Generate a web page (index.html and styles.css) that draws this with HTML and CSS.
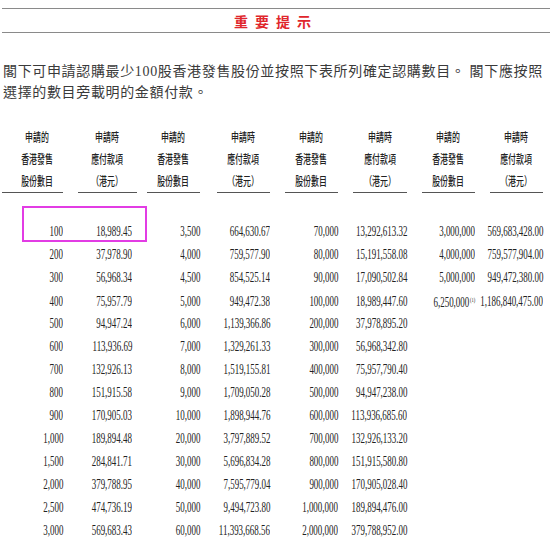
FILE: index.html
```html
<!DOCTYPE html>
<html lang="zh-Hant">
<head>
<meta charset="utf-8">
<title>重要提示</title>
<link rel="stylesheet" href="styles.css">
</head>
<body>
<div class="page">
  <div class="banner"><span class="title">重要提示</span></div>
  <p class="intro">閣下可申請認購最少100股香港發售股份並按照下表所列確定認購數目。 閣下應按照<br>選擇的數目旁載明的金額付款。</p>

  <div class="table">
    <div class="row head">
      <div class="cell"><div class="hd first"><span class="hl">申請的</span><span class="hl">香港發售</span><span class="hl">股份數目</span></div></div>
      <div class="cell"><div class="hd"><span class="hl">申請時</span><span class="hl">應付款項</span><span class="hl">（港元）</span></div></div>
      <div class="cell"><div class="hd"><span class="hl">申請的</span><span class="hl">香港發售</span><span class="hl">股份數目</span></div></div>
      <div class="cell"><div class="hd"><span class="hl">申請時</span><span class="hl">應付款項</span><span class="hl">（港元）</span></div></div>
      <div class="cell"><div class="hd"><span class="hl">申請的</span><span class="hl">香港發售</span><span class="hl">股份數目</span></div></div>
      <div class="cell"><div class="hd"><span class="hl">申請時</span><span class="hl">應付款項</span><span class="hl">（港元）</span></div></div>
      <div class="cell"><div class="hd"><span class="hl">申請的</span><span class="hl">香港發售</span><span class="hl">股份數目</span></div></div>
      <div class="cell"><div class="hd"><span class="hl">申請時</span><span class="hl">應付款項</span><span class="hl">（港元）</span></div></div>
    </div>

    <div class="body">
      <div class="row"><div class="cell"><span class="n">100</span></div><div class="cell"><span class="n">18,989.45</span></div><div class="cell"><span class="n">3,500</span></div><div class="cell"><span class="n">664,630.67</span></div><div class="cell"><span class="n">70,000</span></div><div class="cell"><span class="n">13,292,613.32</span></div><div class="cell"><span class="n">3,000,000</span></div><div class="cell"><span class="n">569,683,428.00</span></div></div>
      <div class="row"><div class="cell"><span class="n">200</span></div><div class="cell"><span class="n">37,978.90</span></div><div class="cell"><span class="n">4,000</span></div><div class="cell"><span class="n">759,577.90</span></div><div class="cell"><span class="n">80,000</span></div><div class="cell"><span class="n">15,191,558.08</span></div><div class="cell"><span class="n">4,000,000</span></div><div class="cell"><span class="n">759,577,904.00</span></div></div>
      <div class="row"><div class="cell"><span class="n">300</span></div><div class="cell"><span class="n">56,968.34</span></div><div class="cell"><span class="n">4,500</span></div><div class="cell"><span class="n">854,525.14</span></div><div class="cell"><span class="n">90,000</span></div><div class="cell"><span class="n">17,090,502.84</span></div><div class="cell"><span class="n">5,000,000</span></div><div class="cell"><span class="n">949,472,380.00</span></div></div>
      <div class="row"><div class="cell"><span class="n">400</span></div><div class="cell"><span class="n">75,957.79</span></div><div class="cell"><span class="n">5,000</span></div><div class="cell"><span class="n">949,472.38</span></div><div class="cell"><span class="n">100,000</span></div><div class="cell"><span class="n">18,989,447.60</span></div><div class="cell"><span class="n">6,250,000<span class="sup">(1)</span></span></div><div class="cell"><span class="n">1,186,840,475.00</span></div></div>
      <div class="row"><div class="cell"><span class="n">500</span></div><div class="cell"><span class="n">94,947.24</span></div><div class="cell"><span class="n">6,000</span></div><div class="cell"><span class="n">1,139,366.86</span></div><div class="cell"><span class="n">200,000</span></div><div class="cell"><span class="n">37,978,895.20</span></div><div class="cell"></div><div class="cell"></div></div>
      <div class="row"><div class="cell"><span class="n">600</span></div><div class="cell"><span class="n">113,936.69</span></div><div class="cell"><span class="n">7,000</span></div><div class="cell"><span class="n">1,329,261.33</span></div><div class="cell"><span class="n">300,000</span></div><div class="cell"><span class="n">56,968,342.80</span></div><div class="cell"></div><div class="cell"></div></div>
      <div class="row"><div class="cell"><span class="n">700</span></div><div class="cell"><span class="n">132,926.13</span></div><div class="cell"><span class="n">8,000</span></div><div class="cell"><span class="n">1,519,155.81</span></div><div class="cell"><span class="n">400,000</span></div><div class="cell"><span class="n">75,957,790.40</span></div><div class="cell"></div><div class="cell"></div></div>
      <div class="row"><div class="cell"><span class="n">800</span></div><div class="cell"><span class="n">151,915.58</span></div><div class="cell"><span class="n">9,000</span></div><div class="cell"><span class="n">1,709,050.28</span></div><div class="cell"><span class="n">500,000</span></div><div class="cell"><span class="n">94,947,238.00</span></div><div class="cell"></div><div class="cell"></div></div>
      <div class="row"><div class="cell"><span class="n">900</span></div><div class="cell"><span class="n">170,905.03</span></div><div class="cell"><span class="n">10,000</span></div><div class="cell"><span class="n">1,898,944.76</span></div><div class="cell"><span class="n">600,000</span></div><div class="cell"><span class="n">113,936,685.60</span></div><div class="cell"></div><div class="cell"></div></div>
      <div class="row"><div class="cell"><span class="n">1,000</span></div><div class="cell"><span class="n">189,894.48</span></div><div class="cell"><span class="n">20,000</span></div><div class="cell"><span class="n">3,797,889.52</span></div><div class="cell"><span class="n">700,000</span></div><div class="cell"><span class="n">132,926,133.20</span></div><div class="cell"></div><div class="cell"></div></div>
      <div class="row"><div class="cell"><span class="n">1,500</span></div><div class="cell"><span class="n">284,841.71</span></div><div class="cell"><span class="n">30,000</span></div><div class="cell"><span class="n">5,696,834.28</span></div><div class="cell"><span class="n">800,000</span></div><div class="cell"><span class="n">151,915,580.80</span></div><div class="cell"></div><div class="cell"></div></div>
      <div class="row"><div class="cell"><span class="n">2,000</span></div><div class="cell"><span class="n">379,788.95</span></div><div class="cell"><span class="n">40,000</span></div><div class="cell"><span class="n">7,595,779.04</span></div><div class="cell"><span class="n">900,000</span></div><div class="cell"><span class="n">170,905,028.40</span></div><div class="cell"></div><div class="cell"></div></div>
      <div class="row"><div class="cell"><span class="n">2,500</span></div><div class="cell"><span class="n">474,736.19</span></div><div class="cell"><span class="n">50,000</span></div><div class="cell"><span class="n">9,494,723.80</span></div><div class="cell"><span class="n">1,000,000</span></div><div class="cell"><span class="n">189,894,476.00</span></div><div class="cell"></div><div class="cell"></div></div>
      <div class="row"><div class="cell"><span class="n">3,000</span></div><div class="cell"><span class="n">569,683.43</span></div><div class="cell"><span class="n">60,000</span></div><div class="cell"><span class="n">11,393,668.56</span></div><div class="cell"><span class="n">2,000,000</span></div><div class="cell"><span class="n">379,788,952.00</span></div><div class="cell"></div><div class="cell"></div></div>
    </div>
    <div class="highlight"></div>
  </div>
</div>
</body>
</html>
```

FILE: styles.css
```css
html, body {
  margin: 0;
  padding: 0;
  background: #ffffff;
}

.page {
  position: relative;
  padding: 8px 4px 0 2px;
  font-family: "Liberation Serif", "Noto Sans CJK TC", serif;
  color: #333333;
}

.banner {
  border-top: 1.5px solid #8a8a8a;
  border-bottom: 1.5px solid #8a8a8a;
  height: 23px;
  display: flex;
  align-items: center;
  justify-content: center;
}

.title {
  font-family: "Noto Sans CJK TC", sans-serif;
  font-size: 14px;
  font-weight: 700;
  letter-spacing: 7px;
  color: #e0262c;
  line-height: 1;
}

.intro {
  margin: 28px 0 0 1px;
  font-size: 14px;
  line-height: 21px;
  letter-spacing: 0.65px;
  color: #3a3a3a;
  white-space: nowrap;
}

.table {
  position: relative;
  margin-top: 23px;
}

.row {
  display: grid;
  grid-template-columns: 76px 69px 70px 68px 68px 69px 68px 53px;
}

.row > .cell:nth-child(1) { padding-right: 15px; }
.row > .cell:nth-child(2) { padding-right: 10px; }
.row > .cell:nth-child(3) { padding-right: 17px; }
.row > .cell:nth-child(4) { padding-right: 15px; }
.row > .cell:nth-child(5) { padding-right: 15px; }
.row > .cell:nth-child(6) { padding-right: 15px; }
.row > .cell:nth-child(7) { padding-right: 15px; }
.row > .cell:nth-child(8) { padding-right: 0; }

.hd {
  display: flex;
  flex-direction: column;
  align-items: center;
  border-bottom: 1.5px solid #555555;
  font-family: "Noto Sans CJK TC", sans-serif;
  font-size: 12px;
  font-weight: 500;
  line-height: 22px;
  color: #222222;
}

.hd.first {
  padding-left: 9px;
}

.hl {
  display: block;
  white-space: nowrap;
  transform: scaleX(0.66);
}

.body {
  margin-top: 27px;
}

.body .row {
  height: 23px;
  align-items: center;
}

.body .cell {
  display: flex;
  justify-content: flex-end;
  white-space: nowrap;
}

.body .row > .cell:nth-child(2) .n {
  margin-right: 5px;
}

.n {
  display: inline-block;
  font-size: 14px;
  line-height: 22px;
  color: #222222;
  transform: scaleX(0.64);
  transform-origin: right center;
}

.sup {
  font-size: 7px;
  vertical-align: 5px;
  margin-left: 1px;
}

.highlight {
  position: absolute;
  left: 20px;
  top: 80px;
  width: 125px;
  height: 36px;
  box-sizing: border-box;
  border: 2px solid #e23ce4;
}
```
